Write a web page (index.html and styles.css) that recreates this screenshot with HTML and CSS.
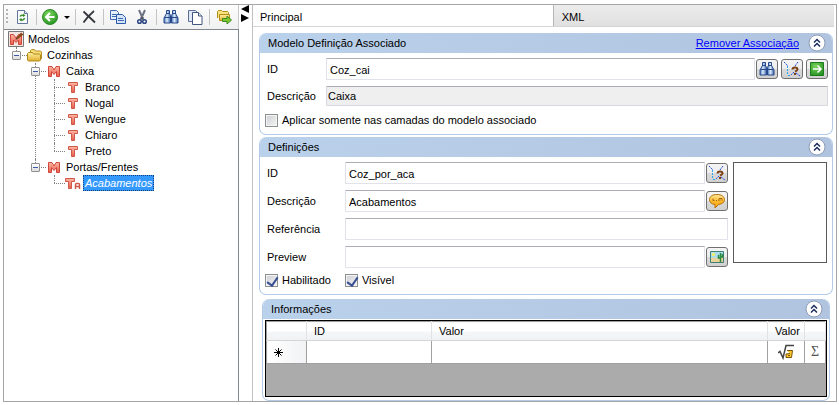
FILE: index.html
```html
<!DOCTYPE html>
<html lang="pt-BR">
<head>
    <meta charset="UTF-8">
    <title>Modelos</title>
    <link rel="stylesheet" href="styles.css">
</head>
<body>

<!-- Ícones compartilhados -->
<svg class="sprite" aria-hidden="true">
    <defs>
        <linearGradient id="redFill" x1="0" y1="0" x2="0" y2="1">
            <stop offset="0" stop-color="#fbb8a4"/>
            <stop offset="1" stop-color="#ea5c4a"/>
        </linearGradient>
        <linearGradient id="goldFill" x1="0" y1="0" x2="0" y2="1">
            <stop offset="0" stop-color="#fff0a0"/>
            <stop offset="1" stop-color="#e0b030"/>
        </linearGradient>
        <linearGradient id="blueFill" x1="0" y1="0" x2="1" y2="0">
            <stop offset="0" stop-color="#4a74b8"/>
            <stop offset="0.45" stop-color="#dcebfd"/>
            <stop offset="1" stop-color="#3a64a8"/>
        </linearGradient>
        <radialGradient id="greenFill" cx="0.4" cy="0.3" r="0.8">
            <stop offset="0" stop-color="#7bd35c"/>
            <stop offset="1" stop-color="#1f8f1f"/>
        </radialGradient>
        <linearGradient id="bubbleFill" x1="0" y1="0" x2="0" y2="1">
            <stop offset="0" stop-color="#ffe9a0"/>
            <stop offset="0.5" stop-color="#fdb92c"/>
            <stop offset="1" stop-color="#f8a010"/>
        </linearGradient>
    </defs>

    <symbol id="icon-m" viewBox="0 0 16 16">
        <path d="M2.500 13.500v-10H6L8 7l2-3.500h3.500v10h-3v-5l-2.500 3-2.500-3v5z" fill="url(#redFill)" stroke="#d0483c"/>
    </symbol>
    <symbol id="icon-t" viewBox="0 0 16 16">
        <path d="M3.500 3.500h9v3h-3v7h-3v-7h-3z" fill="url(#redFill)" stroke="#d0584a"/>
    </symbol>
    <symbol id="icon-ta" viewBox="0 0 16 16">
        <path d="M.5 3.500h9v3h-3v7h-3v-7h-3z" fill="url(#redFill)" stroke="#d0584a"/>
        <path d="M10.500 14V9.500q0-1 1-1h2q1 0 1 1V14M10.500 11.500h4" fill="none" stroke="#d0584a" stroke-width="1.500"/>
    </symbol>
    <symbol id="icon-folder" viewBox="0 0 16 16">
        <path d="M3.500 10V3.500l1-1h3l1 1.500h5l1 1V12" fill="#f6dd78" stroke="#b89120"/>
        <path d="M.5 6.500l1-1h4l1 1.500h6l1 1v5l-1 1h-11l-1-1z" fill="url(#goldFill)" stroke="#b08818"/>
    </symbol>
    <symbol id="icon-binoculars" viewBox="0 0 16 16">
        <path d="M3.500 1.500h3v3l1 2V14H1V9l2.500-4.500z" fill="url(#blueFill)" stroke="#27498a"/>
        <path d="M9.500 1.500h3v3L15 9v5H8.500V6.500l1-2z" fill="url(#blueFill)" stroke="#27498a"/>
        <path d="M7 7.500h2M3 4.500h4M9 4.500h4M2 8.500h5M9 8.500h5" fill="none" stroke="#27498a"/>
    </symbol>
    <symbol id="icon-pick" viewBox="0 0 16 16">
        <path d="M0 1l4 4M14 1l-3 4M12 12l4 3M10 11l-3 3" stroke="#2349e0" stroke-dasharray="2 1" fill="none"/>
        <path d="M3.500 5v9M4 14.500h3" stroke="#31a6e8" stroke-dasharray="2 1" fill="none"/>
        <path d="M8.500 8.500Q8.500 6.500 11 6.500T13.500 8.500Q13.500 9.500 11 10.500" stroke="#7a4018" stroke-width="2" fill="none"/>
        <path d="M10 12h2v2h-2z" fill="#7a4018"/>
    </symbol>
    <symbol id="icon-up" viewBox="0 0 18 18">
        <circle cx="9" cy="9" r="8" fill="#fff" stroke="#8f9bb5"/>
        <path d="M6 8.500l3-3 3 3M6 12.500l3-3 3 3" fill="none" stroke="#1d2d5c" stroke-width="1.500"/>
    </symbol>
</svg>

<div class="workspace">

    <!-- Árvore de modelos -->
    <div class="explorer">
        <div class="toolbar">
            <span class="grip"></span>
            <button class="tool" aria-label="Atualizar">
                <svg viewBox="0 0 16 16"><path d="M3.500 1.500h7l3 3v10h-10z" fill="#f7fafc" stroke="#63759a"/><path d="M10.500 1.500v3h3" fill="#dfe7f2" stroke="#63759a"/><path d="M6 7.500q1-2 3.500-1M10.500 9q-1 3-4 1.500" fill="none" stroke="#3d8f2e" stroke-width="1.500"/><path d="M9 4.500l2.500 2L9 8zM7.500 9L5 10.500l2.500 2z" fill="#3d8f2e"/></svg>
            </button>
            <span class="divider"></span>
            <button class="tool tool-back" aria-label="Voltar">
                <svg viewBox="0 0 16 16"><circle cx="8" cy="8" r="7.500" fill="url(#greenFill)" stroke="#2c8a28"/><path d="M12.500 8H4.500M8 4L4 8l4 4" fill="none" stroke="#fff" stroke-width="2"/></svg>
                <span class="caret"></span>
            </button>
            <span class="divider"></span>
            <button class="tool" aria-label="Excluir">
                <svg viewBox="0 0 16 16"><path d="M2.500 2.500L14 13.500M13 2Q7 7 2.500 13.500" fill="none" stroke="#34373d" stroke-width="1.800"/></svg>
            </button>
            <span class="divider"></span>
            <button class="tool" aria-label="Copiar">
                <svg viewBox="0 0 16 16"><path d="M.5 1.500h6l2 2v7h-8z" fill="#e6effc" stroke="#3e68b0"/><path d="M2 5.500h4M2 7.500h4" stroke="#3e68b0"/><path d="M6.500 5.500h6l3 3v6h-9z" fill="#d4e4fb" stroke="#2c58a8"/><path d="M8 9.500h5M8 11.500h6" stroke="#3e68b0"/></svg>
            </button>
            <button class="tool" aria-label="Recortar">
                <svg viewBox="0 0 16 16"><path d="M5 1l4.500 10M11 1L6.500 11" stroke="#6c7482" stroke-width="2" fill="none"/><path d="M7 8.500l1 1M8 9.500l1-1" stroke="#222"/><circle cx="5.500" cy="12.500" r="1.800" fill="none" stroke="#2d4684" stroke-width="1.500"/><circle cx="10.500" cy="12.500" r="1.800" fill="none" stroke="#2d4684" stroke-width="1.500"/></svg>
            </button>
            <span class="divider"></span>
            <button class="tool" aria-label="Localizar">
                <svg><use href="#icon-binoculars"/></svg>
            </button>
            <button class="tool" aria-label="Duplicar">
                <svg viewBox="0 0 16 16"><path d="M1.500 1.500h7l2 2v9h-9z" fill="#dfe9f6" stroke="#5c6f95"/><path d="M5.500 3.500h6l3.500 3.500v8.500H5.500z" fill="#fff" stroke="#42557e"/><path d="M11.500 3.500V7H15" fill="#dfe7f2" stroke="#42557e"/></svg>
            </button>
            <span class="divider"></span>
            <button class="tool" aria-label="Exportar">
                <svg viewBox="0 0 16 16"><path d="M1.500 9V2.500l1-1h3l1 1h5l1 1V7" fill="#f8e27c" stroke="#b58d1e"/><path d="M3.500 5.500h10v6h-10z" fill="url(#goldFill)" stroke="#b58d1e"/><path d="M6.500 9.500H11V7l4.500 4-4.500 4v-2.500H6.500z" fill="#7cc832" stroke="#3f8a1a"/></svg>
            </button>
        </div>

        <div class="tree">
            <div class="node">
                <svg class="node-icon" viewBox="0 0 16 16"><path d="M.5.5h15v15H.5z" fill="#f4e6e2" stroke="#777"/><path d="M2.500 13.500v-10h3L8 7l2.500-3.500h3v10h-3V9L8 11.500 5.500 9v4.500z" fill="url(#redFill)" stroke="#d0483c"/><path d="M8 7l5-5.500 2.500 2L10 8z" fill="#8c4a1c"/><path d="M8 7l2 1-2.500.5z" fill="#222"/></svg>
                <span class="node-label">Modelos</span>
            </div>
            <ul>
                <li>
                    <button class="expander" aria-label="Recolher"></button>
                    <div class="node"><svg class="node-icon"><use href="#icon-folder"/></svg><span class="node-label">Cozinhas</span></div>
                    <ul>
                        <li>
                            <button class="expander" aria-label="Recolher"></button>
                            <div class="node"><svg class="node-icon"><use href="#icon-m"/></svg><span class="node-label">Caixa</span></div>
                            <ul>
                                <li><div class="node"><svg class="node-icon"><use href="#icon-t"/></svg><span class="node-label">Branco</span></div></li>
                                <li><div class="node"><svg class="node-icon"><use href="#icon-t"/></svg><span class="node-label">Nogal</span></div></li>
                                <li><div class="node"><svg class="node-icon"><use href="#icon-t"/></svg><span class="node-label">Wengue</span></div></li>
                                <li><div class="node"><svg class="node-icon"><use href="#icon-t"/></svg><span class="node-label">Chiaro</span></div></li>
                                <li><div class="node"><svg class="node-icon"><use href="#icon-t"/></svg><span class="node-label">Preto</span></div></li>
                            </ul>
                        </li>
                        <li>
                            <button class="expander" aria-label="Recolher"></button>
                            <div class="node"><svg class="node-icon"><use href="#icon-m"/></svg><span class="node-label">Portas/Frentes</span></div>
                            <ul>
                                <li><div class="node"><svg class="node-icon"><use href="#icon-ta"/></svg><span class="node-label selected">Acabamentos</span></div></li>
                            </ul>
                        </li>
                    </ul>
                </li>
            </ul>
        </div>
    </div>

    <!-- Divisor -->
    <div class="splitter">
        <span class="arrow-left"></span>
        <span class="arrow-right"></span>
    </div>

    <!-- Propriedades -->
    <div class="details">
        <div class="tabs">
            <button class="tab active">Principal</button>
            <button class="tab">XML</button>
        </div>

        <div class="groups">
            <section class="group">
                <header class="group-header">
                    <h2>Modelo Definição Associado</h2>
                    <a href="#">Remover Associação</a>
                    <button class="collapse" aria-label="Recolher"><svg><use href="#icon-up"/></svg></button>
                </header>
                <div class="group-body">
                    <div class="field">
                        <label for="assocId">ID</label>
                        <input class="text-input" type="text" id="assocId" value="Coz_cai">
                        <div class="actions">
                            <button class="icon-btn" aria-label="Localizar"><svg><use href="#icon-binoculars"/></svg></button>
                            <button class="icon-btn" aria-label="Selecionar"><svg><use href="#icon-pick"/></svg></button>
                            <button class="icon-btn" aria-label="Ir para"><svg viewBox="0 0 16 16"><path d="M1.500 1.500h13v13h-13z" fill="url(#greenFill)" stroke="#1d7a1d"/><path d="M4 8h8M8.500 4.500L12 8l-3.500 3.500" fill="none" stroke="#fff" stroke-width="1.500"/></svg></button>
                        </div>
                    </div>
                    <div class="field">
                        <label for="assocDesc">Descrição</label>
                        <input class="text-input readonly" type="text" id="assocDesc" value="Caixa" readonly>
                    </div>
                    <div class="checks">
                        <label><input type="checkbox"> Aplicar somente nas camadas do modelo associado</label>
                    </div>
                </div>
            </section>

            <section class="group">
                <header class="group-header">
                    <h2>Definições</h2>
                    <button class="collapse" aria-label="Recolher"><svg><use href="#icon-up"/></svg></button>
                </header>
                <div class="group-body">
                    <div class="definition">
                        <div class="definition-fields">
                            <div class="field">
                                <label for="defId">ID</label>
                                <input class="text-input" type="text" id="defId" value="Coz_por_aca">
                                <button class="icon-btn" aria-label="Selecionar"><svg><use href="#icon-pick"/></svg></button>
                            </div>
                            <div class="field">
                                <label for="defDesc">Descrição</label>
                                <input class="text-input" type="text" id="defDesc" value="Acabamentos">
                                <button class="icon-btn" aria-label="Comentário"><svg viewBox="0 0 16 16"><path d="M8 1.500c4.500 0 7.500 2 7.500 5s-2.500 4.500-6 5L6 15v-3.500C2.500 11 .5 9.500.5 6.500c0-3 3-5 7.500-5z" fill="url(#bubbleFill)" stroke="#b5700c"/><path d="M4 5.500v2h1.500M9 7h2.500M10 5.500h3v2M7 7.500h1" fill="none" stroke="#a3620d"/></svg></button>
                            </div>
                            <div class="field">
                                <label for="defRef">Referência</label>
                                <input class="text-input" type="text" id="defRef">
                            </div>
                            <div class="field">
                                <label for="defPreview">Preview</label>
                                <input class="text-input" type="text" id="defPreview">
                                <button class="icon-btn" aria-label="Imagem"><svg viewBox="0 0 16 16"><path d="M1.500 2.500h13v11h-13z" fill="#a9dcf0" stroke="#3f7f76"/><path d="M2 9q3-1 6 0t6-1v5H2z" fill="#e8d49a"/><circle cx="4.500" cy="5.500" r="1.700" fill="#f6ee6a"/><path d="M11.500 13V4M9.500 6v3h2M13.500 5v3h-2" fill="none" stroke="#2d8a3a" stroke-width="1.500"/></svg></button>
                            </div>
                        </div>
                        <div class="preview"></div>
                    </div>
                    <div class="checks">
                        <label><input type="checkbox" checked> Habilitado</label>
                        <label><input type="checkbox" checked> Visível</label>
                    </div>
                </div>
            </section>

            <section class="group group-info">
                <header class="group-header">
                    <h2>Informações</h2>
                    <button class="collapse" aria-label="Recolher"><svg><use href="#icon-up"/></svg></button>
                </header>
                <div class="grid">
                    <table>
                        <thead>
                            <tr>
                                <th class="col-mark"></th>
                                <th class="col-id">ID</th>
                                <th>Valor</th>
                                <th class="col-calc">Valor</th>
                                <th class="col-sum"></th>
                            </tr>
                        </thead>
                        <tbody>
                            <tr>
                                <td class="row-mark"><svg viewBox="0 0 9 9"><path d="M4.500 0v9M0 4.500h9M1.500 1.500l6 6M7.500 1.500l-6 6" stroke="#000"/></svg></td>
                                <td></td>
                                <td></td>
                                <td class="center"><svg class="root" viewBox="0 0 16 16"><path d="M0 9l2-1.500L5 14 8 1.500h8" fill="none" stroke="#444" stroke-width="1.500"/><path d="M9 6.500h5.500l-1 7H8v-3.500l4-.5" fill="#fbc52c" stroke="#7a5508"/><path d="M10 11.500h2" stroke="#7a5508"/></svg></td>
                                <td class="center sum">Σ</td>
                            </tr>
                        </tbody>
                    </table>
                </div>
            </section>
        </div>
    </div>
</div>

</body>
</html>
```

FILE: styles.css
```css
* {
    box-sizing: border-box;
}

body {
    margin: 0;
    padding: 4px 2px 3px 3px;
    height: 100vh;
    background: #fff;
    color: #000;
    font-family: "Liberation Sans", Arial, sans-serif;
    font-size: 11px;
    line-height: 16px;
}

button,
input {
    font: inherit;
    color: inherit;
    margin: 0;
}

button {
    padding: 0;
    border: 0;
    background: none;
}

ul {
    list-style: none;
    margin: 0;
    padding: 0;
}

svg {
    display: block;
    width: 16px;
    height: 16px;
}

.sprite {
    position: absolute;
    width: 0;
    height: 0;
}

.workspace {
    display: flex;
    height: 100%;
    border: 1px solid #a5a5a5;
    overflow: hidden;
}

/* Painel esquerdo */
.explorer {
    width: 235px;
    flex: none;
    display: flex;
    flex-direction: column;
}

.toolbar {
    display: flex;
    align-items: center;
    gap: 4px;
    height: 24px;
    padding: 0 4px 0 2px;
    background: linear-gradient(#fdfdfd, #f0f0f0);
    border-right: 1px solid #c8c8c8;
}

.tool {
    display: flex;
    align-items: center;
    padding: 0 2px;
}

.tool-back {
    gap: 6px;
    padding: 0 1px;
}

.caret {
    border: 3px solid transparent;
    border-top-color: #000;
    border-bottom: 0;
}

.grip {
    width: 2px;
    height: 16px;
    background: repeating-linear-gradient(#b5b5b5 0 2px, transparent 2px 4px);
}

.divider {
    width: 1px;
    height: 16px;
    background: #c4c4c4;
}

.tree {
    flex: 1;
    padding: 1px 0 0 4px;
    border-top: 1px solid #828790;
    border-right: 1px solid #828790;
}

.tree ul ul {
    margin-left: 19px;
}

.tree > ul {
    margin-left: 8px;
}

.tree li {
    position: relative;
}

/* linhas pontilhadas da árvore */
.tree li::before {
    content: "";
    position: absolute;
    left: 0;
    top: 0;
    height: 100%;
    border-left: 1px dotted #808080;
}

.tree li:last-child::before {
    height: 8px;
}

.tree li::after {
    content: "";
    position: absolute;
    left: 0;
    top: 8px;
    width: 11px;
    border-top: 1px dotted #808080;
}

.tree li > .node {
    padding-left: 11px;
}

.node {
    display: flex;
    align-items: center;
    gap: 2px;
    height: 16px;
}

.node-icon {
    flex: none;
}

.node-label {
    padding: 0 2px;
    line-height: 16px;
}

.node-label.selected {
    background: #3399ff;
    color: #fff;
    font-style: italic;
    outline: 1px dotted #14407a;
    outline-offset: -1px;
}

.expander {
    position: absolute;
    z-index: 1;
    left: -4px;
    top: 4px;
    width: 9px;
    height: 9px;
    border: 1px solid #919191;
    border-radius: 1px;
    background: linear-gradient(#3c5aa8, #3c5aa8) center / 5px 1px no-repeat, linear-gradient(#fff, #ddd);
}

/* Divisor */
.splitter {
    width: 13px;
    flex: none;
    padding-left: 2px;
}

.splitter span {
    display: block;
    width: 0;
    border: 4px solid transparent;
    margin-bottom: 1px;
}

.splitter .arrow-left {
    border-right: 8px solid #000;
    border-left: 0;
}

.splitter .arrow-right {
    border-left: 8px solid #000;
    border-right: 0;
}

/* Painel direito */
.details {
    flex: 1;
    min-width: 0;
    border-left: 1px solid #c0c0c0;
}

.tabs {
    display: flex;
    height: 22px;
    margin-right: 2px;
    border-bottom: 1px solid #d4d4d4;
}

.tab {
    flex: 13;
    padding: 2px 8px 0;
    text-align: left;
    background: linear-gradient(#ececec, #e0e0e0);
    border-left: 1px solid #b5b5b5;
}

.tab.active {
    flex: 14;
    padding-left: 7px;
    background: #fff;
    border-left: 0;
}

.groups {
    padding: 6px 3px 0 6px;
}

.group {
    margin-bottom: 2px;
    border: 1px solid #b3cbe8;
    border-top: 0;
    border-radius: 7px;
    background: #fff;
}

.group-header {
    display: flex;
    align-items: center;
    gap: 9px;
    height: 20px;
    padding: 0 6px 0 8px;
    border-radius: 7px 7px 0 0;
    background: linear-gradient(90deg, #bad1eb, #b0c4e0);
}

.group-header h2 {
    flex: 1;
    margin: 0;
    font-size: 11px;
    font-weight: normal;
}

.group-header a {
    color: #0000ff;
}

.collapse svg {
    width: 18px;
    height: 18px;
}

.group-body {
    padding: 5px 4px 6px 5px;
}

.field {
    display: flex;
    align-items: center;
    gap: 1px;
    height: 22px;
    margin-bottom: 5px;
}

.field label {
    flex: none;
    width: 60px;
    padding-left: 2px;
}

.text-input {
    flex: 1;
    min-width: 0;
    height: 22px;
    padding: 1px 3px 0;
    background: #fff;
    border: 1px solid #e2e3ea;
    border-top-color: #abadb3;
    border-radius: 1px;
}

.text-input.readonly {
    height: 20px;
    padding: 0 1px;
    background: #efefef;
    border-color: #abadb3 #d8d9de #d8d9de;
}

.actions {
    display: flex;
    gap: 3px;
}

.icon-btn {
    display: flex;
    align-items: center;
    justify-content: center;
    flex: none;
    width: 22px;
    height: 20px;
    border: 1px solid #707070;
    border-radius: 3px;
    background: linear-gradient(#f4f4f4, #ececec 50%, #dadada 50%, #d0d0d0);
}

.definition {
    display: flex;
    gap: 5px;
    margin-bottom: 4px;
}

.definition-fields {
    display: grid;
    gap: 6px;
    flex: 1;
    min-width: 0;
}

.definition .field {
    margin-bottom: 0;
}

.definition .field label {
    width: 79px;
}

.preview {
    width: 94px;
    height: 101px;
    margin-right: 1px;
    border: 1px solid #5a5a5a;
    background: #fff;
}

.checks {
    display: flex;
    gap: 14px;
}

.checks label {
    display: flex;
    align-items: center;
    gap: 4px;
}

input[type="checkbox"] {
    appearance: none;
    position: relative;
    width: 13px;
    height: 13px;
    border: 1px solid #8e8f8f;
    box-shadow: inset 0 0 0 1px #f4f4f4;
    background: linear-gradient(135deg, #cdcfd4, #f4f4f4);
}

input[type="checkbox"]:checked::after {
    content: "";
    position: absolute;
    left: 3px;
    top: 0;
    width: 5px;
    height: 9px;
    border: solid #3a4f94;
    border-width: 0 2px 2px 0;
    transform: rotate(35deg);
}

/* Grade de informações */
.group-info {
    margin: 4px 3px 0;
    padding-bottom: 3px;
}

.grid {
    height: 77px;
    margin: 1px 2px 0;
    border: 1px solid #000;
    background: #ababab;
}

.grid table {
    width: 100%;
    table-layout: fixed;
    border-collapse: collapse;
    border-top: 1px solid #a0a0a0;
    border-left: 1px solid #a0a0a0;
}

.grid th {
    height: 19px;
    padding: 0 7px;
    text-align: left;
    font-weight: normal;
    background: linear-gradient(#fff 50%, #f5f6f8 50%, #f1f2f4);
    border-right: 1px solid #e0e2e6;
    border-bottom: 1px solid #d5d5d5;
}

.grid td {
    height: 23px;
    padding: 0 7px;
    background: #fff;
    border-right: 1px solid #a0a0a0;
    border-bottom: 1px solid #a0a0a0;
}

.grid .col-mark {
    width: 40px;
}

.grid .col-id {
    width: 125px;
}

.grid .col-calc {
    width: 37px;
}

.grid .col-sum {
    width: 21px;
}

.grid .row-mark {
    background: linear-gradient(90deg, #fff, #f1f2f4);
}

.row-mark svg {
    width: 9px;
    height: 9px;
}

.grid .center {
    padding: 0;
    text-align: center;
}

.grid .root {
    margin: 0 auto;
}

.grid .sum {
    color: #555;
    font-family: "Liberation Serif", serif;
    font-size: 14px;
}
```
